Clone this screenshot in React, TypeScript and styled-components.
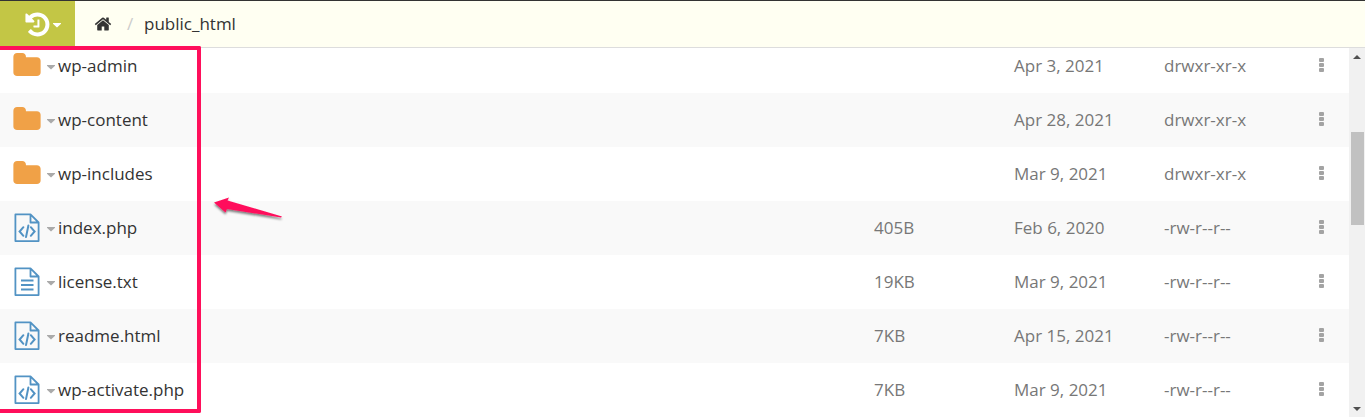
import React from 'react';
import styled, { createGlobalStyle } from 'styled-components';

const GlobalStyle = createGlobalStyle`
  * { box-sizing: border-box; }
  body {
    margin: 0;
    background: #fff;
    color: #333;
    font-family: 'Open Sans', 'Noto Sans', sans-serif;
    font-size: 17px;
    line-height: 24px;
  }
  button { font: inherit; border: 0; padding: 0; background: none; cursor: pointer; }
  svg { display: block; }
`;

const Page = styled.div`
  position: relative;
  display: flex;
  flex-direction: column;
  height: 100vh;
  overflow: hidden;
`;

const TopBar = styled.header`
  display: flex;
  flex: none;
  height: 48px;
  border-top: 1px solid #333;
  border-bottom: 1px solid #ddd;
  background: #fffff2;
`;

const HistoryButton = styled.button`
  display: flex;
  align-items: center;
  gap: 2px;
  width: 75px;
  padding-left: 25px;
  background: #c3c645;
  color: #fff;
`;

const Breadcrumb = styled.nav`
  display: flex;
  align-items: center;
  padding-left: 19px;
`;

const Crumb = styled.a`
  color: #333;
  text-decoration: none;
`;

const Separator = styled.span`
  width: 32px;
  padding-left: 4px;
  text-align: center;
  color: #ccc;
`;

const Body = styled.main`
  display: flex;
  flex: 1;
  min-height: 0;
`;

const ListView = styled.div`
  flex: 1;
  overflow: hidden;
`;

const FileTable = styled.table`
  width: 100%;
  margin-top: -9px;
  border-collapse: collapse;
  table-layout: fixed;
`;

const Row = styled.tr`
  height: 54px;
  &:nth-child(even) { background: #f9f9f9; }
`;

const Cell = styled.td<{ $width?: number }>`
  width: ${(p) => (p.$width ? `${p.$width}px` : 'auto')};
  padding: 0;
  color: #777;
  white-space: nowrap;
`;

const NameLine = styled.div`
  display: flex;
  align-items: center;
  padding-left: 13px;
`;

const IconSlot = styled.span`
  width: 34px;
`;

const MenuButton = styled.button`
  display: flex;
  width: 11px;
  color: #aaa;
`;

const FileLink = styled.a`
  color: #333;
  text-decoration: none;
`;

const MoreButton = styled.button`
  display: flex;
  justify-content: center;
  width: 100%;
  color: #a3a3a3;
`;

const ScrollTrack = styled.div`
  display: flex;
  flex: none;
  flex-direction: column;
  align-items: center;
  width: 16px;
  background: #f1f1f1;
`;

const ScrollArrow = styled.button`
  display: flex;
  align-items: center;
  justify-content: center;
  width: 16px;
  height: 17px;
  color: #505050;
`;

const ScrollLane = styled.div`
  display: flex;
  flex: 1;
  flex-direction: column;
  align-items: center;
  width: 16px;
`;

const LaneSpace = styled.div<{ $grow: number }>`
  flex: ${(p) => p.$grow} 1 0;
`;

const ScrollThumb = styled.div`
  flex: 93 1 0;
  width: 13px;
  background: #c1c1c1;
`;

const Highlight = styled.div`
  position: absolute;
  top: 46px;
  left: 0;
  width: 201px;
  height: 367px;
  border: 4px solid #ff0f5b;
  border-left: 0;
  border-radius: 0 2px 2px 0;
  pointer-events: none;
`;

const Pointer = styled.svg`
  position: absolute;
  top: 192px;
  left: 210px;
  pointer-events: none;
`;

const HistoryIcon = () => (
  <svg width="26" height="28" viewBox="100 -30 1664 1792" fill="currentColor" aria-hidden="true">
    <path d="M1664 896q0 156-61 298t-164 245-245 164-298 61q-172 0-327-72.5t-264-204.5q-7-10-6.5-22.5t8.5-20.5l137-138q10-9 25-9 16 2 23 12 73 95 179 147t225 52q104 0 198.5-40.5t163.5-109.5 109.5-163.5 40.5-198.5-40.5-198.5-109.5-163.5-163.5-109.5-198.5-40.5q-98 0-188 35.5t-160 101.5l137 138q31 30 14 69-17 40-59 40h-448q-26 0-45-19t-19-45v-448q0-42 40-59 39-17 69 14l130 129q107-101 244.5-156.5t284.5-55.5q156 0 298 61t245 164 164 245 61 298zm-640-288v448q0 14-9 23t-23 9h-320q-14 0-23-9t-9-23v-64q0-14 9-23t23-9h224v-352q0-14 9-23t23-9h64q14 0 23 9t9 23z" />
  </svg>
);

const HomeIcon = () => (
  <svg width="18" height="18" viewBox="0 0 1792 1792" fill="currentColor" aria-hidden="true">
    <path d="M1472 992v480q0 26-19 45t-45 19h-384v-384h-256v384h-384q-26 0-45-19t-19-45v-480q0-1 .5-3t.5-3l575-474 575 474q1 2 1 6zm223-69l-62 74q-8 9-21 11h-3q-13 0-21-7l-692-577-692 577q-12 8-24 7-13-2-21-11l-62-74q-8-10-7-23.5t11-21.5l719-599q32-26 76-26t76 26l244 204v-195q0-14 9-23t23-9h192q14 0 23 9t9 23v408l219 182q10 8 11 21.5t-7 23.5z" />
  </svg>
);

const CaretIcon = () => (
  <svg width="8" height="12" viewBox="0 0 8 12" fill="currentColor" aria-hidden="true">
    <path d="M0 5h8v.8L4 9.600 0 5.800z" />
  </svg>
);

const FolderIcon = () => (
  <svg width="28" height="26" viewBox="0 128 1664 1588" fill="#f0a147" aria-hidden="true">
    <path d="M1664 608v704q0 92-66 158t-158 66h-1216q-92 0-158-66t-66-158v-960q0-92 66-158t158-66h320q92 0 158 66t66 158v32h672q92 0 158 66t66 158z" />
  </svg>
);

const FileIcon = ({ code }: { code: boolean }) => (
  <svg width="28" height="30" viewBox="0 0 28 30" fill="none" stroke="#5293c4" strokeWidth="1.8" aria-hidden="true">
    <path d="M17.500 1.400H2.400V28.100H25.600V9.500zM17.500 1.400V9.500H25.600" strokeLinejoin="round" />
    {code ? (
      <path d="M10.400 14.200L6.600 18.500l3.800 4.300M17.800 14.200l3.800 4.300-3.800 4.300M15.400 12.500l-2.400 11.600" strokeLinecap="round" strokeWidth="2" />
    ) : (
      <path d="M8 13.500h12.500M8 18h12.500M8 22.500h12.500" />
    )}
  </svg>
);

const MoreIcon = () => (
  <svg width="5" height="16" viewBox="0 0 5 16" fill="currentColor" aria-hidden="true">
    <rect width="5" height="4" rx="1" />
    <rect y="5" width="5" height="4" rx="1" />
    <rect y="10" width="5" height="4" rx="1" />
  </svg>
);

const ScrollIcon = ({ up }: { up: boolean }) => (
  <svg width="8" height="4" viewBox="0 0 8 4" fill="currentColor" aria-hidden="true">
    <path d={up ? 'M4 0l4 4H0z' : 'M0 0h8L4 4z'} />
  </svg>
);

type Kind = 'folder' | 'code' | 'text';
type Entry = { name: string; kind: Kind; size: string; date: string; mode: string };

const entries: Entry[] = [
  { name: 'wp-admin', kind: 'folder', size: '', date: 'Apr 3, 2021', mode: 'drwxr-xr-x' },
  { name: 'wp-content', kind: 'folder', size: '', date: 'Apr 28, 2021', mode: 'drwxr-xr-x' },
  { name: 'wp-includes', kind: 'folder', size: '', date: 'Mar 9, 2021', mode: 'drwxr-xr-x' },
  { name: 'index.php', kind: 'code', size: '405B', date: 'Feb 6, 2020', mode: '-rw-r--r--' },
  { name: 'license.txt', kind: 'text', size: '19KB', date: 'Mar 9, 2021', mode: '-rw-r--r--' },
  { name: 'readme.html', kind: 'code', size: '7KB', date: 'Apr 15, 2021', mode: '-rw-r--r--' },
  { name: 'wp-activate.php', kind: 'code', size: '7KB', date: 'Mar 9, 2021', mode: '-rw-r--r--' },
];

export default function App() {
  return (
    <Page>
      <GlobalStyle />
      <TopBar>
        <HistoryButton aria-label="History">
          <HistoryIcon />
          <CaretIcon />
        </HistoryButton>
        <Breadcrumb aria-label="Path">
          <Crumb href="#home" aria-label="Home"><HomeIcon /></Crumb>
          <Separator>/</Separator>
          <Crumb href="#public_html">public_html</Crumb>
        </Breadcrumb>
      </TopBar>
      <Body>
        <ListView>
          <FileTable>
            <tbody>
              {entries.map((e) => (
                <Row key={e.name}>
                  <Cell>
                    <NameLine>
                      <IconSlot>
                        {e.kind === 'folder' ? <FolderIcon /> : <FileIcon code={e.kind === 'code'} />}
                      </IconSlot>
                      <MenuButton aria-label={`Actions for ${e.name}`}><CaretIcon /></MenuButton>
                      <FileLink href={`#${e.name}`}>{e.name}</FileLink>
                    </NameLine>
                  </Cell>
                  <Cell $width={140}>{e.size}</Cell>
                  <Cell $width={150}>{e.date}</Cell>
                  <Cell $width={130}>{e.mode}</Cell>
                  <Cell $width={55}>
                    <MoreButton aria-label={`More options for ${e.name}`}><MoreIcon /></MoreButton>
                  </Cell>
                </Row>
              ))}
            </tbody>
          </FileTable>
        </ListView>
        <ScrollTrack>
          <ScrollArrow aria-label="Scroll up"><ScrollIcon up /></ScrollArrow>
          <ScrollLane>
            <LaneSpace $grow={67} />
            <ScrollThumb />
            <LaneSpace $grow={175} />
          </ScrollLane>
          <ScrollArrow aria-label="Scroll down"><ScrollIcon up={false} /></ScrollArrow>
        </ScrollTrack>
      </Body>
      <Highlight />
      <Pointer width="80" height="32" viewBox="0 0 80 32" aria-hidden="true">
        <defs>
          <filter id="shadow" x="-10%" y="-20%" width="120%" height="160%">
            <feDropShadow dx="0" dy="2" stdDeviation="1" floodColor="#000" floodOpacity="0.5" />
          </filter>
        </defs>
        <path d="M4 10.500L19 5.500L17.500 8.500L72 24.500L71 25.500L17 17L15.500 20.500z" fill="#ff0f5b" filter="url(#shadow)" />
      </Pointer>
    </Page>
  );
}
